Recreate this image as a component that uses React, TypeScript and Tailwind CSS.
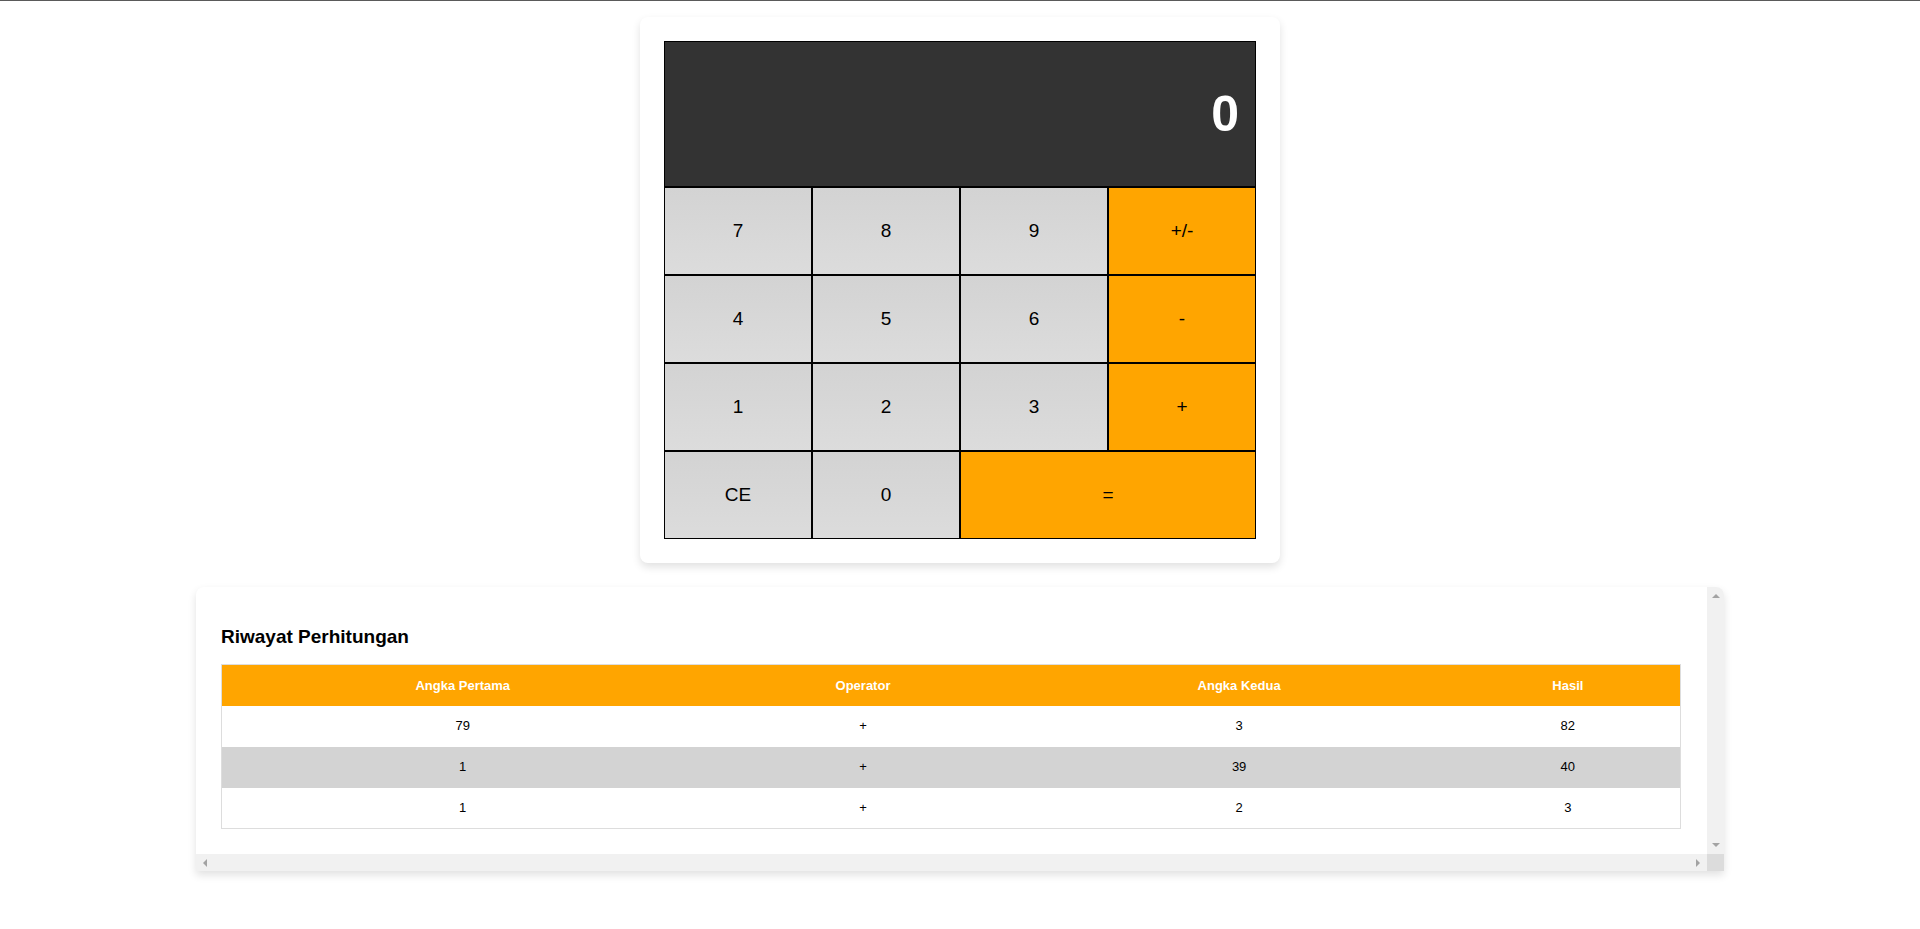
import React from "react";

const font = { fontFamily: '"Liberation Sans", Arial, sans-serif' };

type Key = { label: string; orange?: boolean; span?: boolean };

const keys: Key[] = [
  { label: "7" },
  { label: "8" },
  { label: "9" },
  { label: "+/-", orange: true },
  { label: "4" },
  { label: "5" },
  { label: "6" },
  { label: "-", orange: true },
  { label: "1" },
  { label: "2" },
  { label: "3" },
  { label: "+", orange: true },
  { label: "CE" },
  { label: "0" },
  { label: "=", orange: true, span: true },
];

const history = [
  ["79", "+", "3", "82"],
  ["1", "+", "39", "40"],
  ["1", "+", "2", "3"],
];

function Calculator() {
  return (
    <div className="w-[640px] rounded-lg bg-white p-6 shadow-[0_4px_8px_rgba(0,0,0,0.12)]">
      <div className="flex h-[146px] items-center justify-end border border-black bg-[#333333] pr-4">
        <span className="text-[50px] font-bold text-white">0</span>
      </div>
      <div className="grid grid-cols-4">
        {keys.map((k) => (
          <button
            key={k.label}
            className={
              "flex h-[88px] items-center justify-center border border-black text-[19px] text-black " +
              (k.orange ? "bg-[#ffa500] " : "bg-linear-to-b from-[#d3d3d3] to-[#dcdcdc] ") +
              (k.span ? "col-span-2" : "")
            }
          >
            {k.label}
          </button>
        ))}
      </div>
    </div>
  );
}

function History() {
  return (
    <div className="flex w-[1528px] flex-col overflow-hidden rounded-t-lg bg-white shadow-[0_4px_8px_rgba(0,0,0,0.12)]">
      <div className="flex">
        <div className="flex-1 pb-[25px] pl-[25px] pt-[39px]">
          <h3 className="mb-4 text-[19px] font-bold leading-[22px] text-black">Riwayat Perhitungan</h3>
          <table className="w-[1460px] border border-[#dddddd] text-[13px]">
            <thead>
              <tr className="h-[41px] bg-[#ffa500] text-white">
                <th className="px-3 text-center font-bold">Angka Pertama</th>
                <th className="px-3 text-center font-bold">Operator</th>
                <th className="px-3 text-center font-bold">Angka Kedua</th>
                <th className="px-3 text-center font-bold">Hasil</th>
              </tr>
            </thead>
            <tbody>
              {history.map((row, i) => (
                <tr key={i} className={"h-[41px] text-black " + (i % 2 === 1 ? "bg-[#d3d3d3]" : "bg-white")}>
                  {row.map((c, j) => (
                    <td key={j} className="px-3 text-center">
                      {c}
                    </td>
                  ))}
                </tr>
              ))}
            </tbody>
          </table>
        </div>
        <div className="flex w-[17px] flex-col items-center justify-between bg-[#f1f1f1] py-[7px]">
          <div className="h-0 w-0 border-x-[4px] border-b-[4px] border-x-transparent border-b-[#a3a3a3]" />
          <div className="h-0 w-0 border-x-[4px] border-t-[4px] border-x-transparent border-t-[#a3a3a3]" />
        </div>
      </div>
      <div className="flex h-[17px]">
        <div className="flex flex-1 items-center justify-between bg-[#f1f1f1] px-[7px]">
          <div className="h-0 w-0 border-y-[4px] border-r-[4px] border-y-transparent border-r-[#a3a3a3]" />
          <div className="h-0 w-0 border-y-[4px] border-l-[4px] border-y-transparent border-l-[#a3a3a3]" />
        </div>
        <div className="w-[17px] bg-[#dcdcdc]" />
      </div>
    </div>
  );
}

export default function App() {
  return (
    <div className="min-h-[929px] w-full bg-white" style={font}>
      <div className="h-px w-full bg-[#5a5a5a]" />
      <div className="flex flex-col items-center gap-6 pt-4">
        <Calculator />
        <History />
      </div>
    </div>
  );
}
